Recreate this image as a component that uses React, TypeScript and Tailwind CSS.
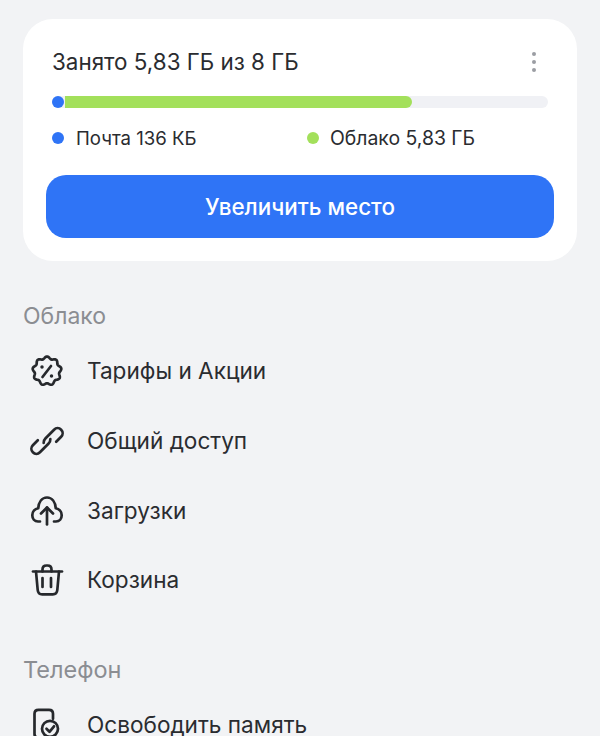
const font = { fontFamily: "Inter, 'Noto Sans', sans-serif" }
const ink = "#26282c"

// scalloped badge outline, 9 bumps around the centre
const badge =
  Array.from({ length: 144 }, (_, i) => {
    const a = (i / 144) * Math.PI * 2
    const r = 13.4 + 1.1 * Math.cos(9 * a)
    const x = 21 + r * Math.sin(a)
    const y = 20 - r * Math.cos(a)
    return (i === 0 ? "M" : "L") + x.toFixed(2) + " " + y.toFixed(2)
  }).join(" ") + "Z"

function PromoIcon() {
  return (
    <svg width="40" height="40" viewBox="0 0 40 40" fill="none" stroke={ink} strokeWidth="2.7" strokeLinecap="round" strokeLinejoin="round">
      <path d={badge} />
      <path d="M25 15 16.500 26" />
      <circle cx="16" cy="16" r="1" fill={ink} strokeWidth="1.5" />
      <circle cx="25.5" cy="25" r="1" fill={ink} strokeWidth="1.5" />
    </svg>
  )
}

function LinkIcon() {
  return (
    <svg width="40" height="40" viewBox="0 1 40 40" fill="none" stroke={ink} strokeWidth="2.7" strokeLinecap="round" strokeLinejoin="round">
      <g transform="rotate(45 21 21)">
        <path d="M28 15V8A5 5 0 0 0 18 8V20c0 2 .6 3.500 2 4.700" />
        <path d="M14 27V34A5 5 0 0 0 24 34V22c0-2-.6-3.500-2-4.700" />
      </g>
    </svg>
  )
}

function UploadIcon() {
  return (
    <svg width="40" height="40" viewBox="0 0 40 40" fill="none" stroke={ink} strokeWidth="2.7" strokeLinecap="round" strokeLinejoin="round">
      <path d="M14 31.500h-2C8.500 31.500 6.300 28.500 6.300 25.300c0-3.500 2.500-6.300 5.900-7C12.700 12 16 7.500 21 7.500s8.300 4.500 8.800 10.800c3.400.7 5.900 3.500 5.900 7 0 3.200-2.200 6.200-5.700 6.200h-2" />
      <path d="M21 34.500V17.500" />
      <path d="m15 23.500 6-6 6 6" />
    </svg>
  )
}

function TrashIcon() {
  return (
    <svg width="40" height="40" viewBox="0 0.5 40 40" fill="none" stroke={ink} strokeWidth="2.7" strokeLinecap="round" strokeLinejoin="round">
      <path d="M7 12h29" />
      <path d="M16.500 12v-2c0-2.500 1.500-4 4-4h1c2.500 0 4 1.500 4 4v2" />
      <path d="m10 12 1.700 18.500c.2 2.500 2 4.300 4.500 4.300h10.600c2.500 0 4.300-1.800 4.500-4.300L33 12" />
      <path d="M16.500 18.500v9M25 18.500v9" />
    </svg>
  )
}

function CleanIcon() {
  return (
    <svg width="40" height="40" viewBox="0 9.200 40 40" fill="none" stroke={ink} strokeWidth="2.7" strokeLinecap="round" strokeLinejoin="round">
      <path d="M14 42h-1.500C10 42 8.500 40.500 8.500 38V18c0-2.500 1.500-4 4-4h10.500c2.500 0 4 1.500 4 4v5" />
      <circle cx="24" cy="33" r="8" />
      <path d="m20.500 33 3 3 4.500-5.500" />
    </svg>
  )
}

function MenuRow({ icon, label }: { icon: React.ReactNode; label: string }) {
  return (
    <div className="flex h-[69.6px] items-center">
      <div className="ml-[3px] h-[40px] w-[40px] shrink-0">{icon}</div>
      <span className="ml-[21px] text-[22.6px] text-[#2a2c30]">{label}</span>
    </div>
  )
}

export default function App() {
  return (
    <div className="h-[736px] overflow-hidden bg-[#f2f3f5] px-[23px] pt-[19px]" style={font}>
      {/* Storage card */}
      <div className="h-[242px] rounded-[30px] bg-white px-[23px] pt-[28px]">
        <div className="flex items-center justify-between px-[6px]">
          <span className="text-[22.4px] leading-[30px] font-normal text-[#2a2c30]">Занято 5,83 ГБ из 8 ГБ</span>
          <div className="mr-[6px] flex flex-col gap-[3.5px] pr-[6px]">
            <span className="h-[4.5px] w-[4.5px] rounded-full bg-[#9b9da3]" />
            <span className="h-[4.5px] w-[4.5px] rounded-full bg-[#9b9da3]" />
            <span className="h-[4.5px] w-[4.5px] rounded-full bg-[#9b9da3]" />
          </div>
        </div>

        <div className="relative mx-[6px] mt-[19px] h-[12px] rounded-full bg-[#f0f1f5]">
          <div className="ml-[13px] h-full w-[347px] rounded-r-full bg-[#a3e05b]" />
          <div className="absolute top-0 left-0 h-[12px] w-[12px] rounded-full bg-[#2f74f6]" />
        </div>

        <div className="mt-[18px] flex px-[6px] text-[18.6px] leading-[24px] text-[#2a2c30]">
          <div className="flex w-[255px] items-center">
            <span className="h-[12px] w-[12px] rounded-full bg-[#2f74f6]" />
            <span className="ml-[12px]">Почта 136 КБ</span>
          </div>
          <div className="flex items-center">
            <span className="h-[12px] w-[12px] rounded-full bg-[#a3e05b]" />
            <span className="ml-[11px] text-[19.4px]">Облако 5,83 ГБ</span>
          </div>
        </div>

        <button className="mt-[25px] flex h-[63px] w-full items-center justify-center rounded-[20px] bg-[#2f74f6] text-[22.4px] font-[500] text-white">
          Увеличить место
        </button>
      </div>

      {/* Cloud section */}
      <div className="mt-[41px] text-[23px] leading-[28px] text-[#8b8d92]">Облако</div>
      <div className="mt-[6.5px]">
        <MenuRow icon={<PromoIcon />} label="Тарифы и Акции" />
        <MenuRow icon={<LinkIcon />} label="Общий доступ" />
        <MenuRow icon={<UploadIcon />} label="Загрузки" />
        <MenuRow icon={<TrashIcon />} label="Корзина" />
      </div>

      {/* Phone section */}
      <div className="mt-[41px] text-[23.5px] leading-[28px] text-[#8b8d92]">Телефон</div>
      <div className="mt-[6px]">
        <MenuRow icon={<CleanIcon />} label="Освободить память" />
      </div>
    </div>
  )
}
